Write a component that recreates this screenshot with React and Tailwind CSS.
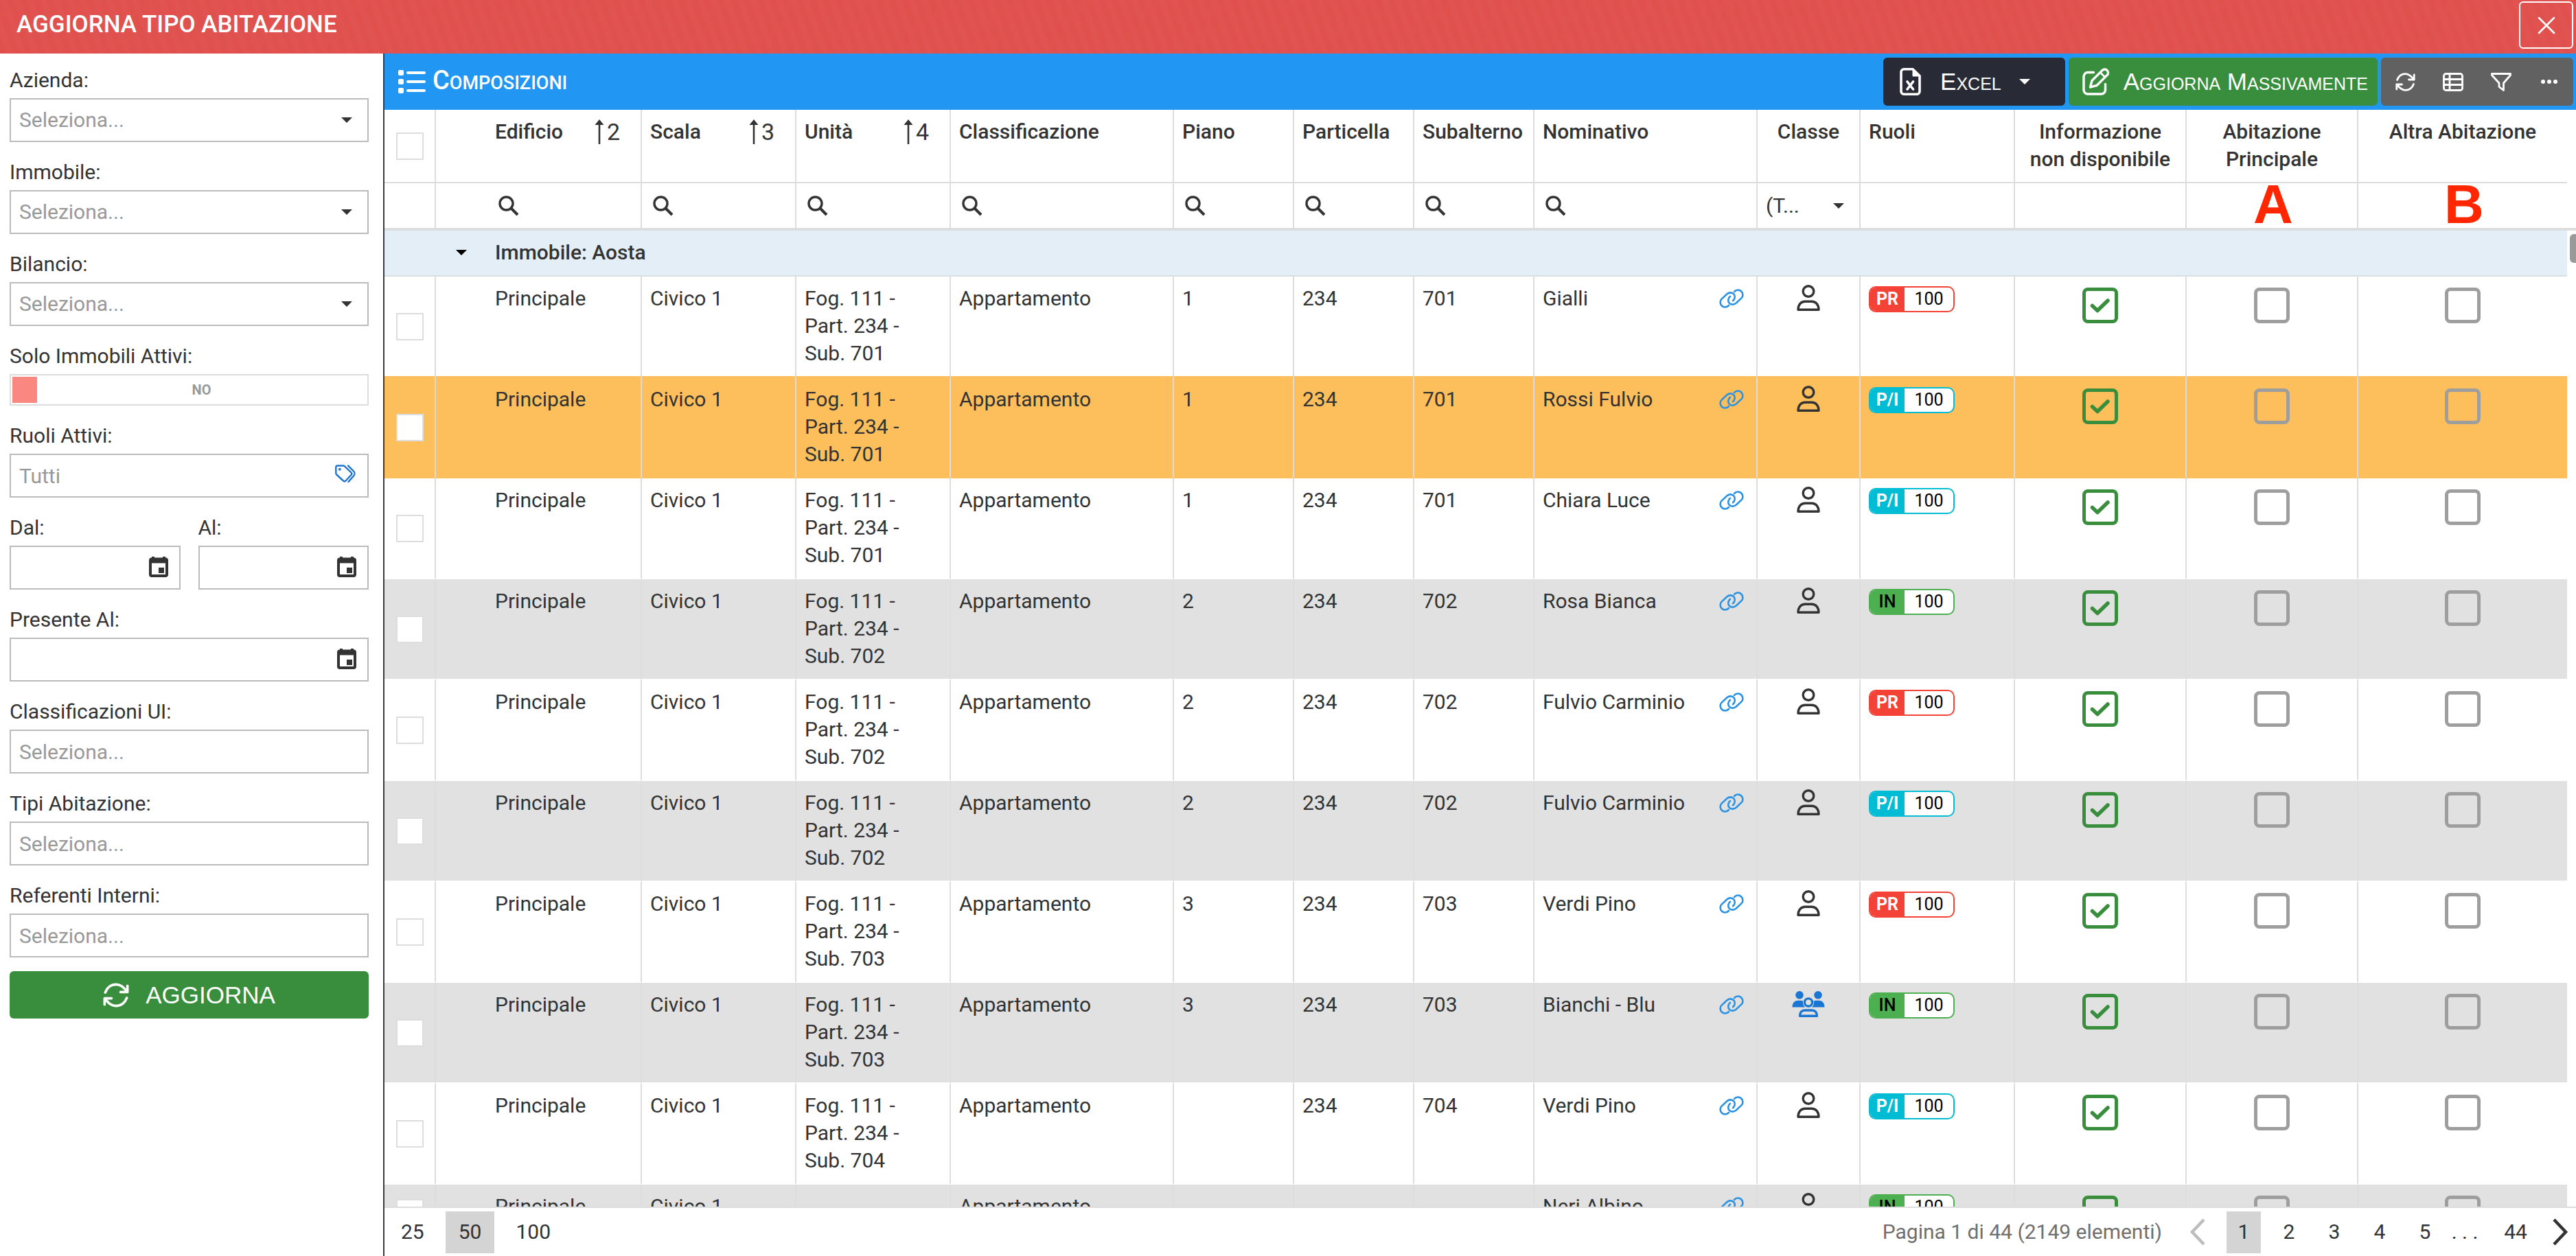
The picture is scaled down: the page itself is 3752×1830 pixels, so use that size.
import React from "react";

/* ---------- icons ---------- */

const line = { fill: "none", stroke: "currentColor", strokeLinecap: "round", strokeLinejoin: "round" };

const Caret = ({ className = "" }) => (
  <svg viewBox="0 0 16 8" className={`w-4 h-2 ${className}`} fill="currentColor" aria-hidden="true">
    <path d="M0 0H16L8 8Z" />
  </svg>
);

const ListIcon = () => (
  <svg viewBox="0 0 40 34" className="w-10 h-[34px]" fill="currentColor" aria-hidden="true">
    {[0, 13, 26].map((y) => (
      <g key={y}>
        <rect x="0" y={y} width="8" height="8" rx="2" />
        <rect x="12" y={y + 2} width="28" height="4" rx="2" />
      </g>
    ))}
  </svg>
);

const CloseIcon = () => (
  <svg viewBox="0 0 26 26" className="w-[26px] h-[26px]" {...line} strokeWidth="2.6" aria-hidden="true">
    <path d="M2 2L24 24M24 2L2 24" />
  </svg>
);

const ExcelIcon = () => (
  <svg viewBox="0 0 31 40" className="w-[31px] h-10" {...line} strokeWidth="3.6" aria-hidden="true">
    <path d="M19 1.8H6a4 4 0 0 0-4 4V34.2a4 4 0 0 0 4 4H25a4 4 0 0 0 4-4V11.5Z" />
    <path d="M19.5 2.5V11.5H28.5Z" fill="currentColor" strokeWidth="2" />
    <path d="M11 20L19.5 31M19.5 20L11 31" />
  </svg>
);

const EditIcon = () => (
  <svg viewBox="0 0 40 40" className="w-10 h-10" {...line} strokeWidth="3.4" aria-hidden="true">
    <path d="M16.5 6.5H8a6 6 0 0 0-6 6V32a6 6 0 0 0 6 6H27.500a6 6 0 0 0 6-6V23.500" />
    <path d="M29 3.500a4.700 4.700 0 0 1 7 0a4.700 4.700 0 0 1 0 7L21 25.500L11.500 28L14 18.500Z" />
    <path d="M26.500 7L32.500 13" strokeWidth="2.600" />
  </svg>
);

const RefreshIcon = ({ className }) => (
  <svg viewBox="0 0 29 27" className={className} {...line} strokeWidth="2.8" aria-hidden="true">
    <path d="M2.500 10.500C4.500 5 9 1.600 14.500 1.600C19 1.600 22 3.500 27 9.800" />
    <path d="M27.200 3V10H19.500" />
    <path d="M26.500 16.500C24.500 22 20 25.400 14.500 25.400C10 25.400 7 23.500 2 17.200" />
    <path d="M1.800 24V17H9.500" />
  </svg>
);

const ColumnsIcon = () => (
  <svg viewBox="0 0 30 27" className="w-[30px] h-[27px]" {...line} strokeWidth="2.8" aria-hidden="true">
    <rect x="1.500" y="1.500" width="27" height="24" rx="3" />
    <path d="M10 1.500V25.500M1.500 9.500H28.500M1.500 17.500H28.500" />
  </svg>
);

const FilterIcon = () => (
  <svg viewBox="0 0 30 27" className="w-[30px] h-[27px]" {...line} strokeWidth="2.8" aria-hidden="true">
    <path d="M1.500 1.500H28.500V3.500L18.500 15V25.500L12 20.500V15L1.500 3.500Z" />
  </svg>
);

const DotsIcon = () => (
  <svg viewBox="0 0 26 8" className="w-[26px] h-2" fill="currentColor" aria-hidden="true">
    <circle cx="4" cy="4" r="3" />
    <circle cx="13" cy="4" r="3" />
    <circle cx="22" cy="4" r="3" />
  </svg>
);

const SearchIcon = () => (
  <svg viewBox="0 0 30 30" className="w-[30px] h-[30px] shrink-0" {...line} strokeWidth="3.4" aria-hidden="true">
    <circle cx="11.500" cy="11.500" r="9.500" />
    <path d="M18.500 18.500L28 28" strokeLinecap="butt" strokeWidth="4" />
  </svg>
);

const TagsIcon = () => (
  <svg viewBox="0 0 30 27" className="w-[30px] h-[27px]" {...line} strokeWidth="2.4" aria-hidden="true">
    <path d="M1.300 3.500a2 2 0 0 1 2-2H12a3 3 0 0 1 2 .8L23.500 11.500a2.500 2.500 0 0 1 0 3.500L15.500 23.500a2.500 2.500 0 0 1-3.500 0L2.200 14.500a3 3 0 0 1-.9-2Z" />
    <path d="M19 1.500L27 9.500a5 5 0 0 1 0 7L19.500 25" />
    <circle cx="6.800" cy="6.800" r=".8" />
  </svg>
);

const CalendarIcon = () => (
  <svg viewBox="0 0 28 30" className="w-7 h-[30px]" aria-hidden="true">
    <path
      fill="currentColor"
      fillRule="evenodd"
      d="M4 0H8V1.500H20V0H24V1.500A4 4 0 0 1 28 5.500V26a4 4 0 0 1-4 4H4a4 4 0 0 1-4-4V5.500A4 4 0 0 1 4 1.500ZM4 9.500V26H24V9.500Z"
    />
    <rect x="14" y="16" width="8" height="8" fill="currentColor" />
  </svg>
);

const SortIcon = () => (
  <svg viewBox="0 0 14 36" className="w-[14px] h-9" aria-hidden="true">
    <path d="M7 4V36" stroke="currentColor" strokeWidth="2.600" />
    <path d="M7 0L13.500 8H.5Z" fill="currentColor" />
  </svg>
);

const LinkIcon = () => (
  <svg viewBox="0 0 36 28" className="w-9 h-7" {...line} strokeWidth="2.6" aria-hidden="true">
    <path d="M14 24C11 27.200 6.500 27.300 3.800 24.500C1 21.700 .8 17.400 3.600 14.600L11.500 7.200C14.600 4.600 18.800 4.800 21.300 7.400C23.600 10.200 23.300 14.400 20 17.200" />
    <path d="M22 4C25 .8 29.500 .7 32.200 3.500C35 6.300 35.200 10.600 32.400 13.400L24.500 20.800C21.400 23.400 17.200 23.200 14.700 20.600C12.400 17.800 12.700 13.600 16 10.800" />
  </svg>
);

const UserIcon = () => (
  <svg viewBox="0 0 34 38" className="w-[34px] h-[38px]" {...line} strokeWidth="3.4" aria-hidden="true">
    <circle cx="17" cy="9.500" r="7.800" />
    <path d="M2 36.300C2 28.500 6.500 24.200 12 24.200H22C27.500 24.200 32 28.500 32 36.300Z" />
  </svg>
);

const GroupIcon = () => (
  <svg viewBox="0 0 48 38" className="w-12 h-[38px] text-[#1976d2]" aria-hidden="true">
    <g fill="currentColor">
      <circle cx="11" cy="5.800" r="5.800" />
      <circle cx="38" cy="5.800" r="5.800" />
      <path d="M.5 23.500C.5 17 4 13.700 9 13.700H13C14 13.700 15 13.900 16 14.300C15.500 18 16.500 21 19 23.500Z" />
      <path d="M47.500 23.500C47.500 17 44 13.700 39 13.700H35C34 13.700 33 13.900 32 14.300C32.500 18 31.500 21 29 23.500Z" />
    </g>
    <g fill="none" stroke="currentColor" strokeWidth="3.400" strokeLinejoin="round">
      <circle cx="24" cy="16.500" r="5.600" />
      <path d="M11.500 36.300C11.500 31 14.500 28 18.500 28H29.500C33.500 28 36.500 31 36.500 36.300Z" />
    </g>
  </svg>
);

const Chevron = ({ next }) => (
  <svg viewBox="0 0 24 40" className="w-6 h-10" fill="none" stroke="currentColor" strokeWidth="4.500" aria-hidden="true">
    <path d={next ? "M3 2L20 20L3 38" : "M21 2L4 20L21 38"} />
  </svg>
);

/* ---------- filters ---------- */

const box = "w-full h-16 border-2 border-[#bbb] bg-white px-3 outline-none placeholder:text-[#999]";

const Field = ({ id, label, children }) => (
  <div className="mb-6 flex-1">
    <label htmlFor={id} className="block mb-[6px]">{label}</label>
    <div className="relative">{children}</div>
  </div>
);

const SelectField = ({ id, label }) => (
  <Field id={id} label={label}>
    <select id={id} className={`${box} appearance-none text-[#999]`}>
      <option>Seleziona...</option>
    </select>
    <Caret className="absolute right-6 top-7 pointer-events-none" />
  </Field>
);

const TextField = ({ id, label }) => (
  <Field id={id} label={label}>
    <input id={id} className={box} placeholder="Seleziona..." />
  </Field>
);

const DateField = ({ id, label }) => (
  <Field id={id} label={label}>
    <input id={id} className={box} />
    <button type="button" aria-label={`Calendario ${label}`} className="absolute right-[18px] top-4">
      <CalendarIcon />
    </button>
  </Field>
);

const Sidebar = () => (
  <form className="w-[560px] shrink-0 border-r-2 border-[#3a3a44] pl-[14px] pr-[21px] pt-[19px]">
    <SelectField id="azienda" label="Azienda:" />
    <SelectField id="immobile" label="Immobile:" />
    <SelectField id="bilancio" label="Bilancio:" />
    <Field id="attivi" label="Solo Immobili Attivi:">
      <button
        id="attivi"
        type="button"
        role="switch"
        aria-checked="false"
        className="flex w-full h-[46px] items-center border-2 border-[#ddd] p-[2px]"
      >
        <span className="w-9 h-full bg-[#fb8880]" />
        <span className="flex-1 text-center text-[20px] leading-6 font-bold text-[#999]">NO</span>
      </button>
    </Field>
    <Field id="ruoli" label="Ruoli Attivi:">
      <input id="ruoli" className={box} placeholder="Tutti" />
      <button type="button" aria-label="Scegli ruoli" className="absolute right-[19px] top-4 text-[#1f74cf]">
        <TagsIcon />
      </button>
    </Field>
    <div className="flex gap-[26px]">
      <DateField id="dal" label="Dal:" />
      <DateField id="al" label="Al:" />
    </div>
    <DateField id="presente" label="Presente Al:" />
    <TextField id="classificazioni" label="Classificazioni UI:" />
    <TextField id="tipi" label="Tipi Abitazione:" />
    <TextField id="referenti" label="Referenti Interni:" />
    <button
      type="button"
      className="-mt-1 flex h-[69px] w-full items-center justify-center gap-6 rounded-md bg-[#388e3c] font-['Liberation_Sans',sans-serif] text-[35px] text-white"
    >
      <RefreshIcon className="w-[38px] h-9" />
      AGGIORNA
    </button>
  </form>
);

/* ---------- grid ---------- */

const columns = [
  { name: "Edificio", sort: 2, search: true },
  { name: "Scala", sort: 3, search: true },
  { name: "Unità", sort: 4, search: true },
  { name: "Classificazione", search: true },
  { name: "Piano", search: true },
  { name: "Particella", search: true },
  { name: "Subalterno", search: true },
  { name: "Nominativo", search: true },
  { name: "Classe", center: true, select: true },
  { name: "Ruoli" },
  { name: "Informazione non disponibile", center: true },
  { name: "Abitazione Principale", center: true, mark: "A" },
  { name: "Altra Abitazione", center: true, mark: "B" },
];

const rows = [
  { floor: "1", sub: "701", name: "Gialli", role: "PR" },
  { floor: "1", sub: "701", name: "Rossi Fulvio", role: "P/I", selected: true },
  { floor: "1", sub: "701", name: "Chiara Luce", role: "P/I" },
  { floor: "2", sub: "702", name: "Rosa Bianca", role: "IN" },
  { floor: "2", sub: "702", name: "Fulvio Carminio", role: "PR" },
  { floor: "2", sub: "702", name: "Fulvio Carminio", role: "P/I" },
  { floor: "3", sub: "703", name: "Verdi Pino", role: "PR" },
  { floor: "3", sub: "703", name: "Bianchi - Blu", role: "IN", group: true },
  { floor: "", sub: "704", name: "Verdi Pino", role: "P/I" },
  { floor: "", sub: "", name: "Neri Albino", role: "IN" },
];

const roleStyles = {
  PR: { frame: "border-[#f44336]", label: "bg-[#f44336] text-white font-bold" },
  "P/I": { frame: "border-[#00bcd4]", label: "bg-[#00bcd4] text-white font-bold" },
  IN: { frame: "border-[#4caf50]", label: "bg-[#4caf50] text-black font-medium" },
};

const Badge = ({ role }) => (
  <span className={`mt-[2px] flex w-[125px] h-[38px] overflow-hidden rounded-[10px] border-2 bg-white text-[25px] leading-[34px] text-black ${roleStyles[role].frame}`}>
    <span className={`w-[50px] text-center ${roleStyles[role].label}`}>{role}</span>
    <span className="flex-1 text-center">100</span>
  </span>
);

const RowSelect = ({ label }) => (
  <input
    type="checkbox"
    aria-label={label}
    className="mx-auto block h-10 w-10 appearance-none border-2 border-[#ddd] bg-white"
  />
);

const Choice = ({ label, checked }) => (
  <label className="relative mx-auto mt-1 block h-[52px] w-[52px]">
    <input
      type="checkbox"
      aria-label={label}
      defaultChecked={checked}
      className="block h-full w-full appearance-none rounded-lg border-[5px] border-[#9e9e9e] checked:border-[#388e3c]"
    />
    {checked && (
      <svg viewBox="0 0 52 52" className="pointer-events-none absolute inset-0 text-[#388e3c]" {...line} strokeWidth="5.5" aria-hidden="true">
        <path d="M14.500 26.500L22 33.500L37 19" />
      </svg>
    )}
  </label>
);

const Cols = () => (
  <colgroup>
    <col className="w-[75px]" />
    <col className="w-[300px]" />
    <col className="w-[225px]" />
    <col className="w-[225px]" />
    <col className="w-[325px]" />
    <col className="w-[175px]" />
    <col className="w-[175px]" />
    <col className="w-[175px]" />
    <col className="w-[325px]" />
    <col className="w-[150px]" />
    <col className="w-[225px]" />
    <col className="w-[250px]" />
    <col className="w-[250px]" />
    <col />
  </colgroup>
);

const cell = "border-r-2 border-b-2 border-[#ddd] last:border-r-0 px-3 pt-3 pb-[13px]";
const tableStyle = "w-full table-fixed border-separate border-spacing-0";

const FilterCell = ({ col, first }) => (
  <td className={`h-[65px] border-r-2 border-[#ddd] last:border-r-0 p-0 ${first ? "pl-[91px]" : "pl-4"}`}>
    {col.search && (
      <div className="flex items-center">
        <SearchIcon />
        <input aria-label={`Filtra ${col.name}`} className="min-w-0 flex-1 bg-transparent px-2 outline-none" />
      </div>
    )}
    {col.select && (
      <div className="relative -ml-1">
        <select aria-label={`Filtra ${col.name}`} className="w-full appearance-none bg-transparent">
          <option>(T...</option>
        </select>
        <Caret className="pointer-events-none absolute right-[22px] top-4" />
      </div>
    )}
    {col.mark && (
      <div className="h-[65px] pr-3 text-center font-['Liberation_Sans',sans-serif] text-[80px] leading-[61px] font-bold text-[#ff2600]">
        {col.mark}
      </div>
    )}
  </td>
);

const GridHead = () => (
  <div className="shrink-0 border-b-4 border-[#ddd] pr-[13px]">
    <table className={tableStyle}>
      <Cols />
      <thead>
        <tr>
          <th className="border-r-2 border-b-2 border-[#ddd] p-0 align-middle"><RowSelect label="Seleziona tutto" /></th>
          {columns.map((col, i) => (
            <th
              key={col.name}
              className={`${cell} align-top font-medium ${i === 0 ? "pl-[86px]" : ""} ${col.center ? "text-center" : "text-left"}`}
            >
              {col.sort ? (
                <div className="flex h-10 items-center justify-between pr-[18px]">
                  {col.name}
                  <span className="flex items-center gap-1 text-[34px] font-normal">
                    <SortIcon />
                    {col.sort}
                  </span>
                </div>
              ) : (
                col.name
              )}
            </th>
          ))}
        </tr>
        <tr>
          <td className="border-r-2 border-[#ddd]" />
          {columns.map((col, i) => (
            <FilterCell key={col.name} col={col} first={i === 0} />
          ))}
        </tr>
      </thead>
    </table>
  </div>
);

const rowTone = (row, i) => {
  if (row.selected) return "bg-[#fdbe5c] [&>td]:border-b-[#fdbe5c]";
  if (rows[i + 1]?.selected) return "bg-white [&>td]:border-b-[#fdbe5c]";
  return i > 2 && i % 2 === 1 ? "bg-[#e1e1e1] [&>td]:border-b-white" : "bg-white [&>td]:border-b-white";
};

const GridBody = () => (
  <div className="flex min-h-0 flex-1 overflow-hidden">
    <div className="flex-1">
      <table className={tableStyle}>
        <Cols />
        <tbody>
          <tr className="bg-[#e4eef7]">
            <td className="border-b-2 border-[#d8dfe5]" />
            <td colSpan={13} className="border-b-2 border-[#d8dfe5] pt-3 pb-[13px] pl-[29px] font-medium">
              <button type="button" aria-expanded="true" className="flex items-center gap-[41px]">
                <Caret className="text-black" />
                Immobile: Aosta
              </button>
            </td>
          </tr>
          {rows.map((row, i) => (
            <tr key={i} className={`align-top ${rowTone(row, i)}`}>
              <td className="border-r-2 border-b-2 border-[#ddd] p-0 align-middle">
                <RowSelect label={`Seleziona ${row.name}`} />
              </td>
              <td className={`${cell} pl-[86px]`}>Principale</td>
              <td className={cell}>Civico 1</td>
              <td className={cell}>{row.sub && <>Fog. 111 -<br />Part. 234 -<br />Sub. {row.sub}</>}</td>
              <td className={cell}>Appartamento</td>
              <td className={cell}>{row.floor}</td>
              <td className={cell}>{row.sub && "234"}</td>
              <td className={cell}>{row.sub}</td>
              <td className={cell}>
                <div className="flex items-center justify-between pr-[6px]">
                  {row.name}
                  <a href="#scheda" aria-label={`Scheda ${row.name}`} className="text-[#2b93e3]"><LinkIcon /></a>
                </div>
              </td>
              <td className={cell}>
                <div className="flex justify-center">{row.group ? <GroupIcon /> : <UserIcon />}</div>
              </td>
              <td className={cell}><Badge role={row.role} /></td>
              <td className={cell}><Choice label="Informazione non disponibile" checked /></td>
              <td className={cell}><Choice label="Abitazione Principale" /></td>
              <td className={cell}><Choice label="Altra Abitazione" /></td>
            </tr>
          ))}
        </tbody>
      </table>
    </div>
    <div className="w-[13px] shrink-0 bg-white pl-1 pt-[5px]">
      <div className="h-[42px] rounded-l-md bg-[#9a9a9a]" />
    </div>
  </div>
);

const PageButton = ({ children, active, wide }) => (
  <button
    type="button"
    aria-current={active ? "page" : undefined}
    className={`h-[61px] ${wide ? "px-[19px]" : "min-w-[50px]"} ${active ? "bg-[#d4d4d4]" : ""}`}
  >
    {children}
  </button>
);

const Pager = () => (
  <div className="flex h-[72px] shrink-0 items-center border-t-2 border-[#ddd] bg-white pl-[5px] pr-[11px]">
    <div className="flex gap-3">
      <PageButton wide>25</PageButton>
      <PageButton wide active>50</PageButton>
      <PageButton wide>100</PageButton>
    </div>
    <span className="ml-auto mr-10 text-[#707070]">Pagina 1 di 44 (2149 elementi)</span>
    <button type="button" aria-label="Pagina precedente" className="mr-[30px] text-[#bdbdbd]"><Chevron /></button>
    <div className="flex items-center gap-4">
      <PageButton active>1</PageButton>
      <PageButton>2</PageButton>
      <PageButton>3</PageButton>
      <PageButton>4</PageButton>
      <PageButton>5</PageButton>
    </div>
    <span className="w-[66px] text-center">. . .</span>
    <div className="ml-4 mr-7"><PageButton>44</PageButton></div>
    <button type="button" aria-label="Pagina successiva"><Chevron next /></button>
  </div>
);

const Toolbar = () => (
  <div className="flex h-[82px] shrink-0 items-center bg-[#2196f3] pl-5 pr-1 text-white">
    <ListIcon />
    <h2 className="ml-[10px] text-[38px] leading-10 font-medium">
      C<span className="text-[27px] uppercase">omposizioni</span>
    </h2>
    <div className="ml-auto flex gap-[5px] font-['Liberation_Sans',sans-serif] text-[35px]">
      <button type="button" className="flex h-[70px] items-center rounded-md bg-[#282a36] pl-6 pr-[51px] [font-variant:small-caps]">
        <ExcelIcon />
        <span className="ml-7 mr-[26px]">Excel</span>
        <Caret />
      </button>
      <button type="button" className="flex h-[70px] items-center gap-5 rounded-md bg-[#388e3c] pl-5 pr-[14px] [font-variant:small-caps]">
        <EditIcon />
        Aggiorna Massivamente
      </button>
      <div className="grid h-[70px] w-[280px] grid-cols-4 rounded-md bg-[#616161]">
        <button type="button" aria-label="Ricarica" className="grid place-items-center"><RefreshIcon className="w-[29px] h-[27px]" /></button>
        <button type="button" aria-label="Colonne" className="grid place-items-center"><ColumnsIcon /></button>
        <button type="button" aria-label="Filtro" className="grid place-items-center"><FilterIcon /></button>
        <button type="button" aria-label="Altro" className="grid place-items-center"><DotsIcon /></button>
      </div>
    </div>
  </div>
);

export default function App() {
  return (
    <div className="flex h-screen flex-col overflow-hidden bg-white font-[Roboto,sans-serif] text-[30px] leading-10 text-[#333]">
      <header className="flex h-[78px] shrink-0 items-start justify-between bg-[#e0504d] bg-[repeating-linear-gradient(70deg,transparent_0_9px,rgba(255,255,255,0.02)_9px_18px)] pl-6 pr-1 pt-[2px] text-white">
        <h1 className="text-[35px] leading-[68px] font-medium">AGGIORNA TIPO ABITAZIONE</h1>
        <button type="button" aria-label="Chiudi" className="grid h-[69px] w-[79px] place-items-center rounded-md border-2 border-white">
          <CloseIcon />
        </button>
      </header>
      <div className="flex min-h-0 flex-1">
        <Sidebar />
        <main className="flex min-w-0 flex-1 flex-col">
          <Toolbar />
          <GridHead />
          <GridBody />
          <Pager />
        </main>
      </div>
    </div>
  );
}
